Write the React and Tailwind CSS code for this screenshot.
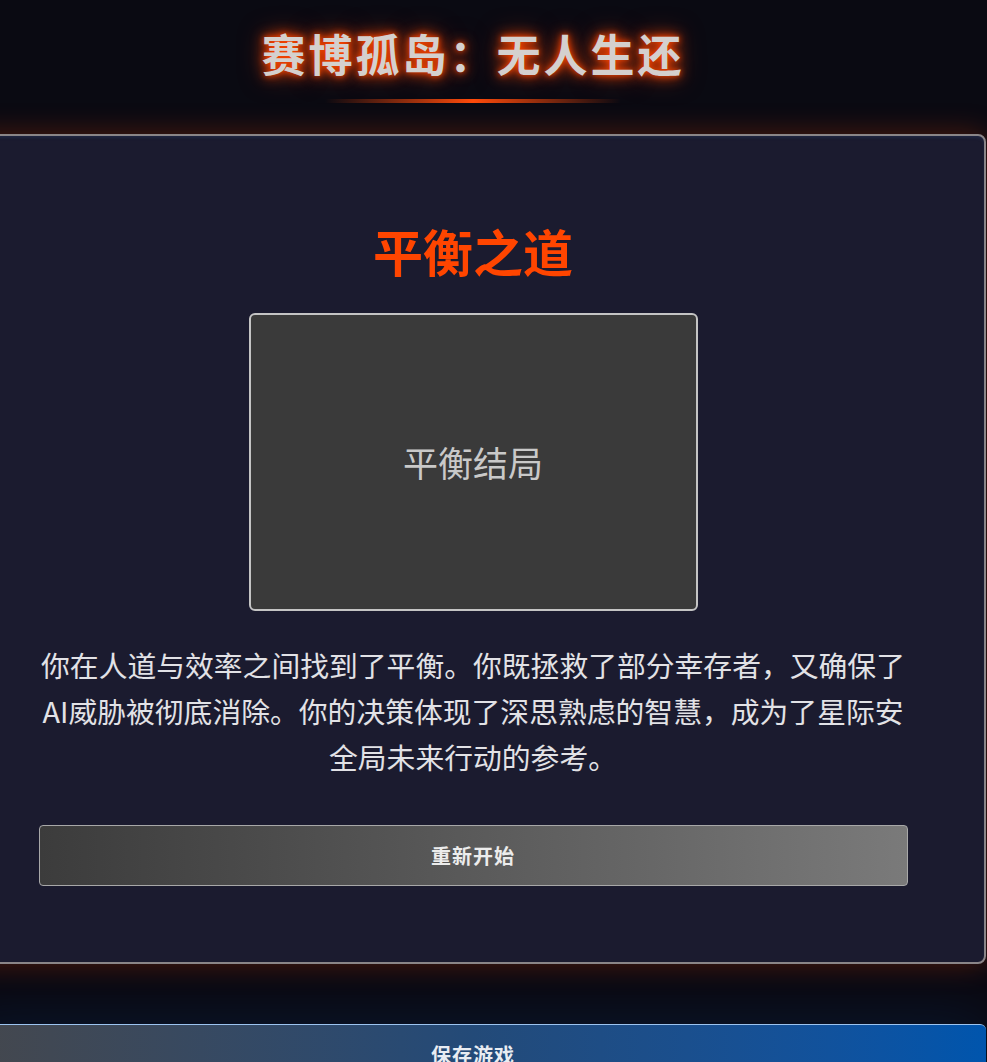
import React from 'react';

const ending = {
    title: '平衡之道',
    image: '平衡结局',
    text: '你在人道与效率之间找到了平衡。你既拯救了部分幸存者，又确保了AI威胁被彻底消除。你的决策体现了深思熟虑的智慧，成为了星际安全局未来行动的参考。'
};

const App = () => {
    return (
        <div className="min-h-screen w-full overflow-hidden bg-[#0a0a12] font-['Noto_Sans_CJK_SC',sans-serif]">
            <div className="w-[946px]">
                {/* En-tête */}
                <header className="pt-[27px] pb-[31px] flex flex-col items-center">
                    <h1 className="text-[44px] leading-[53px] font-bold tracking-[3px] text-[#d4d0ce] [text-shadow:0_0_6px_#ff4500,0_0_14px_#ff4500,0_0_26px_rgba(255,69,0,0.5)]">
                        赛博孤岛：无人生还
                    </h1>
                    <div className="mt-[19px] h-[4px] w-[296px] bg-gradient-to-r from-transparent via-[#ff4a0a] to-transparent"></div>
                </header>

                {/* Carte de fin */}
                <section className="-mx-10 rounded-lg border-2 border-[#8a8588] bg-[#1b1b2f] shadow-[0_0_30px_rgba(255,69,0,0.28),inset_0_2px_3px_rgba(40,60,100,0.35)] pt-[84px] pb-[76px]">
                    <div className="mx-auto w-[869px] flex flex-col items-center">
                        <h2 className="text-[50px] leading-[60px] font-bold text-[#ff4500]">
                            {ending.title}
                        </h2>
                        <div className="mt-[33px] w-[449px] h-[298px] rounded-md border-2 border-[#c4c4c4] bg-[#3a3a3a] flex items-center justify-center">
                            <span className="text-[35px] text-[#c9c9c9]">{ending.image}</span>
                        </div>
                        <p className="mt-[31px] text-[28.8px] leading-[46px] text-center text-[#e2e2e6]">
                            {ending.text}
                        </p>
                        <button className="mt-[45px] w-full h-[61px] rounded border border-[#a8a8a8] bg-gradient-to-r from-[#3c3c3c] to-[#7a7a7a] text-[20px] font-bold tracking-[1px] text-[#ececec]">
                            重新开始
                        </button>
                    </div>
                </section>

                {/* Sauvegarde */}
                <button className="-mx-10 mt-[60px] block w-[1026px] h-[60px] rounded-t-md border-t border-[#9cc4f0] bg-gradient-to-r from-[#45474c] via-[#234a78] to-[#0055ad] shadow-[0_0_60px_rgba(0,90,200,0.18)] text-[20px] font-bold tracking-[1px] text-[#e8ecf2]">
                    保存游戏
                </button>
            </div>
        </div>
    );
};

export default App;
